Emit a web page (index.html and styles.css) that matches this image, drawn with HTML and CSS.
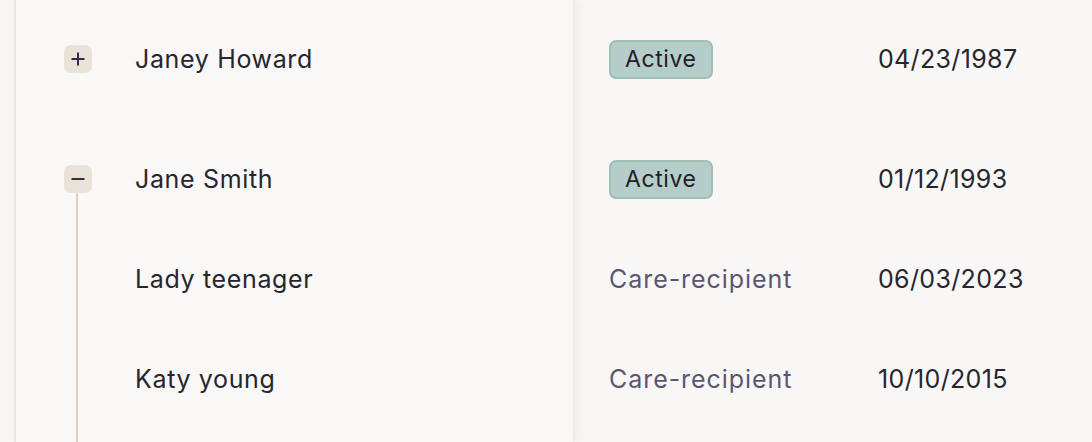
FILE: index.html
```html
<!DOCTYPE html>
<html lang="en">
<head>
<meta charset="utf-8">
<title>Members</title>
<link rel="stylesheet" href="styles.css">
</head>
<body>
<div class="table">
  <div class="frozen">
    <div class="group">
      <div class="row">
        <div class="gutter">
          <button class="toggle" aria-label="Expand">
            <svg viewBox="0 0 14 14" width="14" height="14"><path d="M7 0.5V13.5M0.5 7H13.5" /></svg>
          </button>
        </div>
        <span class="name">Janey Howard</span>
      </div>
    </div>
    <div class="group">
      <div class="row parent">
        <div class="gutter">
          <button class="toggle" aria-label="Collapse">
            <svg viewBox="0 0 14 14" width="14" height="14"><path d="M0.5 7H13.5" /></svg>
          </button>
        </div>
        <span class="name">Jane Smith</span>
      </div>
      <div class="row child">
        <div class="gutter"></div>
        <span class="name">Lady teenager</span>
      </div>
      <div class="row child">
        <div class="gutter"></div>
        <span class="name">Katy young</span>
      </div>
      <div class="tail child"><div class="gutter"></div></div>
    </div>
  </div>
  <div class="scroll">
    <div class="group">
      <div class="row">
        <div class="status"><span class="badge">Active</span></div>
        <div class="date">04/23/1987</div>
      </div>
    </div>
    <div class="group">
      <div class="row">
        <div class="status"><span class="badge">Active</span></div>
        <div class="date">01/12/1993</div>
      </div>
      <div class="row">
        <div class="status"><span class="role">Care-recipient</span></div>
        <div class="date">06/03/2023</div>
      </div>
      <div class="row">
        <div class="status"><span class="role">Care-recipient</span></div>
        <div class="date">10/10/2015</div>
      </div>
    </div>
  </div>
</div>
</body>
</html>
```

FILE: styles.css
```css
* { box-sizing: border-box; }

html, body {
  margin: 0;
  height: 100%;
  overflow: hidden;
  background: #f8f7f6;
}

body {
  font-family: Inter, "Open Sans", "Liberation Sans", sans-serif;
  font-size: 25px;
  color: #27252e;
}

.table {
  display: flex;
  height: 100%;
  padding-left: 14px;
}

.frozen {
  width: 560px;
  flex: none;
  height: 100%;
  padding-top: 9px;
  padding-left: 48px;
  background: #f9f8f7;
  border-left: 2px solid #ebe6e0;
  border-right: 1px solid #ece8e3;
  box-shadow: 3px 0 10px rgba(70, 50, 30, 0.07);
  position: relative;
  z-index: 1;
  display: flex;
  flex-direction: column;
  gap: 20px;
}

.scroll {
  flex: 1;
  padding-top: 9px;
  padding-left: 35px;
  display: flex;
  flex-direction: column;
  gap: 20px;
}

.group {
  display: flex;
  flex-direction: column;
}

.row {
  height: 100px;
  flex: none;
  display: flex;
  align-items: center;
}

.gutter {
  width: 28px;
  height: 100%;
  flex: none;
  display: flex;
  align-items: center;
  margin-right: 43px;
}

.parent .gutter {
  background: linear-gradient(#ddcfbb, #ddcfbb) no-repeat 12px 100% / 2px 50%;
}

.child .gutter {
  background: linear-gradient(#ddcfbb, #ddcfbb) no-repeat 12px 0 / 2px 100%;
}

.tail {
  height: 13px;
  flex: none;
}

.toggle {
  width: 28px;
  height: 28px;
  padding: 0;
  border: 0;
  border-radius: 7px;
  background: #e8e2d8;
  display: flex;
  align-items: center;
  justify-content: center;
  cursor: pointer;
}

.toggle svg path {
  stroke: #302d48;
  stroke-width: 2;
  fill: none;
}

.name {
  letter-spacing: 0.65px;
  white-space: nowrap;
}

.status {
  width: 269px;
  flex: none;
}

.badge {
  display: inline-block;
  height: 39px;
  line-height: 35px;
  padding: 0 14px;
  border: 2px solid #9fbfb7;
  border-radius: 7px;
  background: #b4cdc8;
  color: #222026;
  font-size: 23px;
  letter-spacing: 0.6px;
}

.role {
  color: #5b5670;
  letter-spacing: 0.95px;
}

.date {
  letter-spacing: 0.35px;
}
```
